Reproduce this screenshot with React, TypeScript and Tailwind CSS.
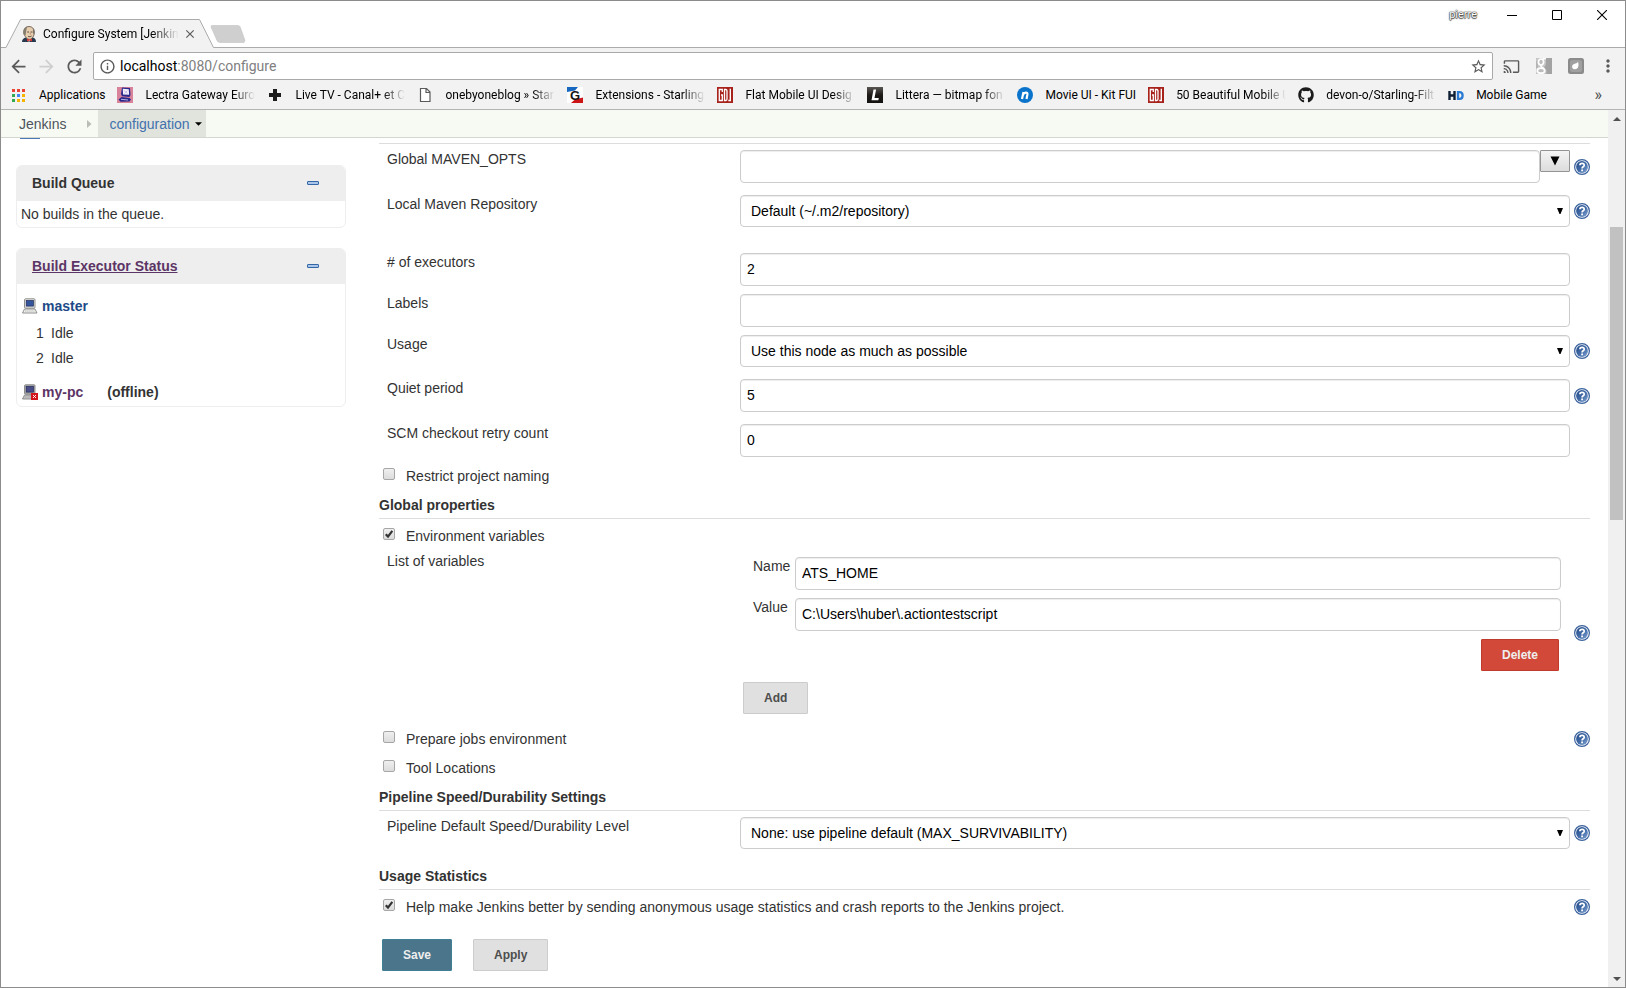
import { useState } from 'react'
import type { ReactNode } from 'react'
import { FaGithub } from 'react-icons/fa'
import {
  MdArrowBack,
  MdArrowForward,
  MdCast,
  MdClose,
  MdInfoOutline,
  MdMoreVert,
  MdRefresh,
  MdStarBorder,
} from 'react-icons/md'

const ButlerIcon = () => (
  <svg viewBox="0 0 16 16" className="size-4 shrink-0" aria-hidden="true">
    <path d="M1 16c0-2.500 1.500-4 4-4.500l3 1.500 3.500-1.500c2.500.5 3.500 2 3.500 4.500z" fill="#26394f" />
    <path d="M5.500 12.500l2.500 3.500 2.500-3.500z" fill="#f4f4f4" />
    <path d="M3 6c0-3.500 2-5.500 5-5.500s5.300 2 5.300 5.500c0 4-2 7.300-4.800 7.300S3 10 3 6z" fill="#e6cdae" stroke="#5d5148" strokeWidth=".8" />
    <path d="M2.500 8.500C1.500 4.500 3 1 6.500.5 5.300 2 5.500 4.500 4.600 9z" fill="#857c70" />
    <path d="M12 2.500c1.800 1.700 1.700 3.500 1.300 6L11.800 7z" fill="#7a7066" />
    <path d="M6.300 6h1.700M9.600 6h1.700M7 10.300c1.200.6 2.600.5 3.600-.2" stroke="#4d4038" strokeWidth=".9" fill="none" />
    <path d="M9 6.500l.6 2.200" stroke="#b78e6c" strokeWidth=".9" />
    <path d="M6 12.600l2.500 1 2.500-1v3l-2.500-1-2.500 1z" fill="#d33833" />
  </svg>
)

const AppsIcon = () => (
  <svg viewBox="0 0 16 16" className="size-4" aria-hidden="true">
    <g fill="#ea4335">
      <path d="M1 2h3v3H1zM6 2h3v3H6zM11 2h3v3h-3z" />
    </g>
    <path d="M1 7h3v3H1zM1 12h3v3H1z" fill="#34a853" />
    <path d="M6 7h3v3H6z" fill="#4285f4" />
    <path d="M11 7h3v3h-3zM11 12h3v3h-3zM6 12h3v3H6z" fill="#f4b400" />
  </svg>
)

const LectraIcon = () => (
  <svg viewBox="0 0 16 16" className="size-4" aria-hidden="true">
    <path d="M0 0h16v16H0z" fill="#d9839a" />
    <path d="M5 .5l8 .5.5 7-1 2-7.500-.8L4 7z" fill="#2b2a8c" />
    <path d="M5.800 1.800l6 .4.300 5.600-6.100-.3z" fill="#f3f0fb" />
    <path d="M7 3.500l3.500 3M10.500 3.500L7.500 6.500" stroke="#c4b4e0" strokeWidth=".8" />
    <path d="M1.500 12.500l3-2.500 8 1 1.500 1.500-1.500 2-9 .3z" fill="#2b2a8c" />
    <path d="M4 12.300l7 .7" stroke="#b6b0e4" strokeWidth="1" />
  </svg>
)

const PlusIcon = () => (
  <svg viewBox="0 0 16 16" className="size-4" aria-hidden="true">
    <path d="M6 2h4v4h4v4h-4v4H6v-4H2V6h4z" fill="#1c1c1c" />
  </svg>
)

const PageIcon = () => (
  <svg viewBox="0 0 16 16" className="size-4" aria-hidden="true">
    <path d="M3.500 1.500h6l3.500 3.500v9.500H3.500zM9 1.500v4h4" fill="#fff" stroke="#5a5a5a" strokeWidth="1.200" />
  </svg>
)

const StarlingIcon = () => (
  <svg viewBox="0 0 16 16" className="size-4" aria-hidden="true">
    <path d="M0 0h16v16H0z" fill="#fff" />
    <path d="M0 0h11L8 3.500 0 5z" fill="#1766c0" />
    <path d="M16 16H4l4-3.500 8-2z" fill="#cc1417" />
    <text x="8" y="13" textAnchor="middle" fontFamily="Liberation Sans, sans-serif" fontWeight="bold" fontSize="13" fill="#151515">G</text>
  </svg>
)

const GdjIcon = () => (
  <svg viewBox="0 0 16 16" className="size-4" aria-hidden="true">
    <path d="M0 0h16v16H0z" fill="#a8221c" />
    <path d="M5.300 5V2.500H2.300v11h3V8H4" fill="none" stroke="#fff" strokeWidth="1.300" />
    <path d="M7.500 2.500v11h1.200c1 0 1.300-.5 1.300-1.500V4c0-1-.3-1.500-1.300-1.500z" fill="none" stroke="#fff" strokeWidth="1.300" />
    <path d="M13.300 1.800v11.700h-2" fill="none" stroke="#fff" strokeWidth="1.400" />
  </svg>
)

const LitteraIcon = () => (
  <svg viewBox="0 0 16 16" className="size-4" aria-hidden="true">
    <defs>
      <linearGradient id="littera" x1="0" y1="0" x2="0" y2="1">
        <stop offset="0" stopColor="#5a5652" />
        <stop offset=".5" stopColor="#1c1917" />
        <stop offset="1" stopColor="#141210" />
      </linearGradient>
    </defs>
    <path d="M0 0h16v16H0z" fill="url(#littera)" />
    <path d="M6.500 2.500h2.600L7.500 11h4.300l-.5 2.300H4.500z" fill="#fff" />
  </svg>
)

const NIcon = () => (
  <svg viewBox="0 0 16 16" className="size-4" aria-hidden="true">
    <circle cx="8" cy="8" r="8" fill="#0a74cc" />
    <path d="M5 12l1.500-7M5.800 8.200C7 5.500 10.800 4.500 10.400 7.400L9.500 12" fill="none" stroke="#fff" strokeWidth="2.200" />
  </svg>
)

const HdIcon = () => (
  <svg viewBox="0 0 16 16" className="size-4" aria-hidden="true">
    <path d="M1.500 4v9M6.500 4v9M1.500 8.500h5" stroke="#0e1f33" strokeWidth="2.400" fill="none" />
    <path d="M10 5.100h1.600c4 0 4 6.800 0 6.800H10z" stroke="#2a7bd3" strokeWidth="2.300" fill="none" />
  </svg>
)

const GoogleExtIcon = () => (
  <svg viewBox="0 0 16 16" className="size-4" aria-hidden="true">
    <path d="M0 0h16v16H0z" fill="#c6c6c6" />
    <path d="M9 0h7v16h-6c1.500-3 0-5-2-6.500C10.500 7 10.500 3 9 0z" fill="#a3a3a3" />
    <path d="M0 3h2v7H0z" fill="#b5b5b5" />
    <ellipse cx="5" cy="4" rx="2.600" ry="3" fill="#bdbdbd" stroke="#fff" strokeWidth="1.700" />
    <ellipse cx="5" cy="12.700" rx="3.700" ry="2.500" fill="#bdbdbd" stroke="#fff" strokeWidth="1.700" />
    <path d="M5 7c-1 1.500 1 2.200 2.600 3.500M6.500.8H10" fill="none" stroke="#fff" strokeWidth="1.500" />
  </svg>
)

const LeafExtIcon = () => (
  <svg viewBox="0 0 16 16" className="size-4" aria-hidden="true">
    <rect width="16" height="16" rx="2.500" fill="#8b8b8b" />
    <rect x="2" y="2" width="12" height="12" rx="2" fill="#a0a0a0" />
    <path d="M10 4c1.200 3 .5 7-3 7.300-2.200.2-3.300-1.600-2.800-3.500C5 5.700 8 6 10 4z" fill="#fff" />
  </svg>
)

const HelpIcon = () => (
  <svg viewBox="0 0 16 16" className="size-4" aria-hidden="true">
    <defs>
      <linearGradient id="help" x1="0" y1="0" x2="1" y2="1">
        <stop offset="0" stopColor="#234a86" />
        <stop offset=".5" stopColor="#3f69a6" />
        <stop offset="1" stopColor="#86a6d3" />
      </linearGradient>
    </defs>
    <circle cx="8" cy="8" r="7.400" fill="#f3f7fc" stroke="#3c639d" strokeWidth="1.200" />
    <circle cx="8" cy="8" r="5.900" fill="url(#help)" />
    <path d="M5.900 6.300C5.900 3.700 10.200 3.700 10.200 6.200c0 1.600-2.100 1.600-2.100 3.200" fill="none" stroke="#fff" strokeWidth="1.700" />
    <path d="M7.200 10.500H9v1.700H7.200z" fill="#fff" />
  </svg>
)

const ComputerIcon = ({ offline = false }: { offline?: boolean }) => (
  <svg viewBox="0 0 16 16" className="size-4" aria-hidden="true">
    <rect x="2.500" y=".8" width="10.500" height="9.400" rx="1" fill={offline ? '#a9a9a9' : '#e4e4e0'} stroke="#858585" strokeWidth=".9" />
    <rect x="4.200" y="2.500" width="7.200" height="5.600" fill={offline ? '#4a4c88' : '#34549c'} stroke="#222c5c" strokeWidth=".7" />
    <path d="M2.500 11h10.500l2 4H.5z" fill={offline ? '#c4c4c4' : '#f3f3f0'} stroke="#858585" strokeWidth=".9" />
    <path d="M3 13h9.500" stroke="#a6a6a6" strokeWidth=".8" strokeDasharray="1.500 .6" />
    {offline && (
      <>
        <path d="M9 9h7v7H9z" fill="#d3141a" />
        <path d="M11 11l3 3M14 11l-3 3" stroke="#fff" strokeWidth=".9" />
      </>
    )}
  </svg>
)

interface Bookmark {
  label: string
  icon: ReactNode
  clipped?: boolean
}

const bookmarks: Bookmark[] = [
  { label: 'Applications', icon: <AppsIcon /> },
  { label: 'Lectra Gateway Euro', icon: <LectraIcon />, clipped: true },
  { label: 'Live TV - Canal+ et C', icon: <PlusIcon />, clipped: true },
  { label: 'onebyoneblog » Star', icon: <PageIcon />, clipped: true },
  { label: 'Extensions - Starling', icon: <StarlingIcon />, clipped: true },
  { label: 'Flat Mobile UI Desig', icon: <GdjIcon />, clipped: true },
  { label: 'Littera — bitmap fon', icon: <LitteraIcon />, clipped: true },
  { label: 'Movie UI - Kit FUI', icon: <NIcon /> },
  { label: '50 Beautiful Mobile U', icon: <GdjIcon />, clipped: true },
  { label: 'devon-o/Starling-Filt', icon: <FaGithub className="size-4 text-[#1b1b1b]" />, clipped: true },
  { label: 'Mobile Game', icon: <HdIcon /> },
]

const TabStrip = () => (
  <div className="flex h-[47px] items-end border-b border-[#ababab] bg-white">
    <div className="relative -mb-px ml-[5px] flex h-[29px] w-[208px] items-center">
      <svg viewBox="0 0 208 29" className="absolute inset-0 h-full w-full" aria-hidden="true">
        <path d="M0 28.500L14.500.5H193.500L207.500 28.500V29H0z" fill="#f2f2f2" />
        <path d="M0 28.500L14.500.5H193.500L207.500 28.500" fill="none" stroke="#ababab" />
      </svg>
      <div className="relative flex w-full items-center pr-[17px] pl-[15px]">
        <ButlerIcon />
        <span className="ml-[6px] w-[136px] overflow-hidden text-xs whitespace-nowrap text-black mask-r-from-80%">
          Configure System [Jenkin
        </span>
        <button type="button" aria-label="Close tab" className="ml-auto text-[#5a5a5a]">
          <MdClose className="size-3.5" />
        </button>
      </div>
    </div>
    <button type="button" aria-label="New tab" className="mb-1 -ml-1">
      <svg viewBox="0 0 36 18" className="h-[18px] w-9" aria-hidden="true">
        <path d="M1.500.5h26.500l2 1 5 14-1 2H9.500l-2-1L1 2z" fill="#cfcfcf" stroke="#c2c2c2" strokeWidth=".6" />
      </svg>
    </button>
    <div className="ml-auto flex items-center self-start pt-1 pr-px">
      <span className="mr-3 text-[11px] leading-5 text-white [text-shadow:0_0_1px_#333,0_0_1px_#333,0_0_2px_#555,0_1px_1px_#555]">
        pierre
      </span>
      <button type="button" aria-label="Minimize" className="grid h-5 w-[45px] place-items-center">
        <svg viewBox="0 0 10 10" className="size-[10px]">
          <path d="M0 5.500h10" stroke="#000" />
        </svg>
      </button>
      <button type="button" aria-label="Maximize" className="grid h-5 w-[45px] place-items-center">
        <svg viewBox="0 0 10 10" className="size-[10px]">
          <path d="M.5.5h9v9h-9z" fill="none" stroke="#000" />
        </svg>
      </button>
      <button type="button" aria-label="Close" className="grid h-5 w-[45px] place-items-center">
        <svg viewBox="0 0 10 10" className="size-[10px]">
          <path d="M0 0l10 10M10 0L0 10" stroke="#000" strokeWidth="1.100" />
        </svg>
      </button>
    </div>
  </div>
)

const Toolbar = () => (
  <div className="flex h-8 items-center bg-[#f2f2f2] pt-1 pl-[7px] text-[#5a5a5a]">
    <button type="button" aria-label="Back" className="mr-[7px]">
      <MdArrowBack className="size-[21px]" />
    </button>
    <button type="button" aria-label="Forward" className="mr-[7px] text-[#cfcfcf]">
      <MdArrowForward className="size-[21px]" />
    </button>
    <button type="button" aria-label="Reload" className="mr-2">
      <MdRefresh className="size-[21px]" />
    </button>
    <div className="flex h-7 flex-1 items-center rounded-xs border border-[#a9a9a9] bg-white px-[5px]">
      <MdInfoOutline className="size-[17px]" />
      <a href="#configure" className="ml-1 flex-1 text-sm text-[#808080]">
        <span className="text-black">localhost</span>:8080/configure
      </a>
      <button type="button" aria-label="Bookmark this page">
        <MdStarBorder className="size-[17px]" />
      </button>
    </div>
    <div className="flex items-center gap-4 pr-[7px] pl-[10px]">
      <MdCast className="size-[17px]" />
      <GoogleExtIcon />
      <LeafExtIcon />
      <button type="button" aria-label="Menu" className="ml-[-2px]">
        <MdMoreVert className="size-5" />
      </button>
    </div>
  </div>
)

const BookmarksBar = () => (
  <nav className="flex h-[30px] items-center gap-3 border-b border-[#b4b4b4] bg-[#f2f2f2] px-[10px] text-xs whitespace-nowrap text-black">
    {bookmarks.map((b) => (
      <a key={b.label} href="#bookmark" className="flex items-center gap-3">
        {b.icon}
        {b.clipped ? (
          <span className="w-[110px] overflow-hidden mask-r-from-80%">{b.label}</span>
        ) : (
          <span>{b.label}</span>
        )}
      </a>
    ))}
    <button type="button" aria-label="More bookmarks" className="mr-[13px] ml-auto text-base leading-4 text-[#4a4a4a]">
      »
    </button>
  </nav>
)

const Panel = ({ title, children }: { title: ReactNode; children: ReactNode }) => (
  <section className="overflow-hidden rounded-md border border-[#eee]">
    <header className="flex h-[35px] items-center justify-between bg-[#eee] pr-[26px] pb-px pl-[15px]">
      <h2 className="font-bold">{title}</h2>
      <button type="button" aria-label="Collapse" className="h-1 w-3 rounded-[1px] border border-[#3465a4] bg-[#a9c6ea]" />
    </header>
    {children}
  </section>
)

const Sidebar = () => (
  <aside className="w-[345px] shrink-0 pl-[15px]">
    <div className="ml-1 h-px w-5 bg-[#4a77b5]" />
    <div className="mt-[26px] space-y-5">
      <Panel title="Build Queue">
        <p className="px-1 py-[3px] leading-5">No builds in the queue.</p>
      </Panel>
      <Panel title={<a href="#computer" className="text-[#5c3566] underline">Build Executor Status</a>}>
        <div className="mt-2 flex h-7 items-center gap-1 px-[5px]">
          <ComputerIcon />
          <a href="#master" className="font-bold text-[#204a87]">master</a>
        </div>
        <table className="ml-[19px]">
          <tbody>
            {[1, 2].map((n) => (
              <tr key={n} className="h-[25px]">
                <td className="w-[15px]">{n}</td>
                <td>Idle</td>
              </tr>
            ))}
          </tbody>
        </table>
        <div className="mt-2 flex h-7 items-center gap-1 px-[5px]">
          <ComputerIcon offline />
          <a href="#my-pc" className="font-bold text-[#5c3566]">my-pc</a>
          <span className="ml-5 font-bold">(offline)</span>
        </div>
      </Panel>
    </div>
  </aside>
)

const inputClass =
  'h-[33px] w-full min-w-0 rounded-sm border border-[#ccc] bg-white px-[6px] pb-0.5 text-black shadow-[inset_0_1px_1px_rgba(0,0,0,0.075)] outline-none'

const HelpLink = () => (
  <a href="#help" aria-label="Help" className="justify-self-end">
    <HelpIcon />
  </a>
)

interface RowProps {
  id: string
  label: string
  help?: boolean
  className?: string
  children: ReactNode
}

const Row = ({ id, label, help, className = '', children }: RowProps) => (
  <div className={`grid grid-cols-[361px_1fr_20px] items-center ${className}`}>
    <label htmlFor={id} className="self-start pl-2 leading-[18px]">
      {label}
    </label>
    <div className="flex items-start">{children}</div>
    {help && <HelpLink />}
  </div>
)

const SelectBox = ({ id, option }: { id: string; option: string }) => (
  <div className="relative w-full">
    <select
      id={id}
      className="h-8 w-full appearance-none rounded-sm border border-[#ccc] bg-white px-[10px] text-black shadow-[inset_0_1px_1px_rgba(0,0,0,0.075)] outline-none"
    >
      <option>{option}</option>
    </select>
    <svg viewBox="0 0 6 6" className="pointer-events-none absolute top-[13px] right-[7px] size-[6px]" aria-hidden="true">
      <path d="M0 0h6L3.500 6h-1z" fill="#000" />
    </svg>
  </div>
)

interface CheckRowProps {
  label: string
  defaultChecked?: boolean
  help?: boolean
  className?: string
}

const CheckRow = ({ label, defaultChecked = false, help, className = '' }: CheckRowProps) => {
  const [checked, setChecked] = useState(defaultChecked)

  return (
    <div className={`flex items-center justify-between ${className}`}>
      <label className="flex items-start gap-[11px] pl-1 leading-5">
        <span className="relative mt-0.5 size-3">
          <input
            type="checkbox"
            checked={checked}
            onChange={(e) => setChecked(e.target.checked)}
            className="block size-3 appearance-none rounded-xs border border-[#a6a6a6] bg-linear-to-b from-[#efefef] to-[#dcdcdc]"
          />
          {checked && (
            <svg viewBox="0 0 12 12" className="pointer-events-none absolute inset-0 size-3" aria-hidden="true">
              <path d="M2.800 6.200l2.200 2.400 4.300-5.800" fill="none" stroke="#333" strokeWidth="2.200" />
            </svg>
          )}
        </span>
        {label}
      </label>
      {help && <HelpLink />}
    </div>
  )
}

const Heading = ({ children, className = '' }: { children: ReactNode; className?: string }) => (
  <h2 className={`border-b border-[#ddd] pb-[3px] leading-5 font-bold ${className}`}>{children}</h2>
)

const grayButton = 'h-8 rounded-[1px] border border-[#ccc] bg-[#e0e0e0] px-5 text-xs font-bold text-[#4d4d4d]'

const ConfigForm = () => (
  <form className="min-w-0 flex-1 pt-[5px] pr-[18px] pb-4 pl-[33px]" onSubmit={(e) => e.preventDefault()}>
    <div className="mb-[6px] border-t border-[#ddd]" />
    <Row id="maven-opts" label="Global MAVEN_OPTS" help>
      <input id="maven-opts" type="text" className={inputClass} />
      <button
        type="button"
        aria-label="Expand"
        className="grid h-[22px] w-[30px] shrink-0 place-items-center rounded-[1px] border border-[#949494] bg-linear-to-b from-[#f4f4f4] to-[#dcdcdc]"
      >
        <svg viewBox="0 0 10 10" className="size-[10px]" aria-hidden="true">
          <path d="M.5.5h9L5 9.500z" fill="#000" />
        </svg>
      </button>
    </Row>
    <Row id="local-repo" label="Local Maven Repository" help className="mt-3">
      <SelectBox id="local-repo" option="Default (~/.m2/repository)" />
    </Row>

    <Row id="executors" label="# of executors" className="mt-[26px]">
      <input id="executors" type="text" defaultValue="2" className={inputClass} />
    </Row>
    <Row id="labels" label="Labels" className="mt-2">
      <input id="labels" type="text" className={inputClass} />
    </Row>
    <Row id="usage" label="Usage" help className="mt-2">
      <SelectBox id="usage" option="Use this node as much as possible" />
    </Row>
    <Row id="quiet-period" label="Quiet period" help className="mt-3">
      <input id="quiet-period" type="text" defaultValue="5" className={inputClass} />
    </Row>
    <Row id="retry-count" label="SCM checkout retry count" className="mt-3">
      <input id="retry-count" type="text" defaultValue="0" className={inputClass} />
    </Row>
    <CheckRow label="Restrict project naming" className="mt-[9px]" />

    <Heading className="mt-[9px]">Global properties</Heading>
    <CheckRow label="Environment variables" defaultChecked className="mt-[7px]" />
    <div className="mt-[6px] grid grid-cols-[361px_1fr_20px] items-center">
      <span className="self-start pl-2 leading-[18px]">List of variables</span>
      <div className="pt-[5px] pl-[3px]">
        <div className="grid grid-cols-[42px_1fr] gap-y-2 pr-[9px] pl-[10px]">
          <label htmlFor="env-name" className="leading-[18px]">Name</label>
          <input id="env-name" type="text" defaultValue="ATS_HOME" className={inputClass} />
          <label htmlFor="env-value" className="leading-[18px]">Value</label>
          <input id="env-value" type="text" defaultValue="C:\Users\huber\.actiontestscript" className={inputClass} />
        </div>
        <div className="mt-2 flex justify-end pr-[11px]">
          <button
            type="button"
            className="h-8 rounded-[1px] border border-[#c03a2b] bg-[#d24939] px-5 text-xs font-bold text-[#eee]"
          >
            Delete
          </button>
        </div>
        <button type="button" className={`mt-[11px] block ${grayButton}`}>
          Add
        </button>
      </div>
      <HelpLink />
    </div>
    <CheckRow label="Prepare jobs environment" help className="mt-[15px]" />
    <CheckRow label="Tool Locations" className="mt-[9px]" />

    <Heading className="mt-[9px]">Pipeline Speed/Durability Settings</Heading>
    <Row id="durability" label="Pipeline Default Speed/Durability Level" help className="mt-[6px]">
      <SelectBox id="durability" option="None: use pipeline default (MAX_SURVIVABILITY)" />
    </Row>

    <Heading className="mt-[17px]">Usage Statistics</Heading>
    <CheckRow
      label="Help make Jenkins better by sending anonymous usage statistics and crash reports to the Jenkins project."
      defaultChecked
      help
      className="mt-[7px]"
    />

    <div className="mt-[22px] flex gap-[21px] pl-[3px]">
      <button
        type="submit"
        className="h-8 rounded-[1px] border border-[#3f7e94] bg-[#4b758b] px-5 text-xs font-bold text-[#eee]"
      >
        Save
      </button>
      <button type="button" className={grayButton}>
        Apply
      </button>
    </div>
  </form>
)

const Breadcrumbs = () => (
  <nav className="flex h-7 items-stretch border-b border-[#d3d7cf] bg-[#f6faf2]">
    <a href="#jenkins" className="flex items-center pl-[18px] text-[#4d545d]">Jenkins</a>
    <span className="flex w-8 items-center justify-end pr-[6px]">
      <svg viewBox="0 0 5 8" className="h-2 w-[5px]" aria-hidden="true">
        <path d="M0 0l4.500 4L0 8z" fill="#babdb6" />
      </svg>
    </span>
    <a href="#configuration" className="flex items-center gap-[5px] bg-[#e1e4dd] pr-1 pl-[11px] text-[#4271ae]">
      configuration
      <svg viewBox="0 0 8 4" className="h-1 w-[7px]" aria-hidden="true">
        <path d="M0 0h8L4 4z" fill="#000" />
      </svg>
    </a>
  </nav>
)

const Scrollbar = () => (
  <div className="flex w-[17px] shrink-0 flex-col items-center bg-[#f0f0f0]" aria-hidden="true">
    <div className="grid h-[17px] place-items-center">
      <svg viewBox="0 0 8 4" className="h-1 w-2">
        <path d="M0 4h8L4 0z" fill="#505050" />
      </svg>
    </div>
    <div className="grow-[100]" />
    <div className="w-[13px] grow-[293] bg-[#c1c1c1]" />
    <div className="grow-[450]" />
    <div className="grid h-[17px] place-items-center">
      <svg viewBox="0 0 8 4" className="h-1 w-2">
        <path d="M0 0h8L4 4z" fill="#505050" />
      </svg>
    </div>
  </div>
)

const App = () => (
  <div className="flex min-h-screen flex-col border border-[#8c8c8c] bg-white font-['Roboto',sans-serif]">
    <TabStrip />
    <Toolbar />
    <BookmarksBar />
    <div className="flex flex-1 font-['Liberation_Sans',Arial,sans-serif] text-sm text-[#333]">
      <div className="min-w-0 flex-1">
        <Breadcrumbs />
        <div className="flex">
          <Sidebar />
          <ConfigForm />
        </div>
      </div>
      <Scrollbar />
    </div>
  </div>
)

export default App
